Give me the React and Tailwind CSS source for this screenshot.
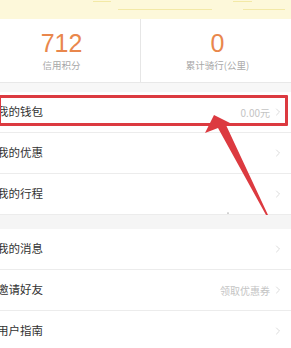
import { ChevronRight } from 'lucide-react'

const rowsA = [
  { label: '我的钱包', extra: '0.00元' },
  { label: '我的优惠' },
  { label: '我的行程' },
]

const rowsB = [
  { label: '我的消息' },
  { label: '邀请好友', extra: '领取优惠券' },
  { label: '用户指南' },
]

function Row({ label, extra }) {
  return (
    <div className="h-[41px] flex items-center justify-between border-b border-[#ececec] pr-[7px]">
      <span className="-ml-[3px] text-[11.5px] text-[#333]">{label}</span>
      <div className="flex items-center gap-[2px]">
        {extra && <span className="text-[10px] text-[#c4c4c4]">{extra}</span>}
        <ChevronRight className="w-[12px] h-[12px] text-[#cfcfcf]" strokeWidth={1.5} />
      </div>
    </div>
  )
}

export default function App() {
  return (
    <main className="relative w-[291px] h-[348px] overflow-hidden bg-white" style={{ fontFamily: '"Noto Sans CJK SC", "Noto Sans", sans-serif' }}>
      {/* yellow header strip */}
      <div className="relative h-[19px] bg-[#fdf8da]">
        <div className="absolute top-[1px] left-[93px] w-[18px] h-[1px] bg-[#f3e9a6]" />
        <div className="absolute top-[9px] left-[118px] w-[94px] h-[1px] bg-[#f3e9a6]" />
        <div className="absolute top-[1px] left-[233px] w-[19px] h-[1px] bg-[#f3e9a6]" />
        <div className="absolute top-[9px] left-[243px] w-[42px] h-[1px] bg-[#f3e9a6]" />
      </div>

      {/* stats */}
      <div className="flex h-[64px] border-b border-[#e8e8e8]">
        <div className="w-[141px] pr-[17px] flex flex-col items-center pt-[9px] border-r border-[#e6e6e6]">
          <span className="text-[25px] leading-[30px] text-[#e9874c]" style={{ fontFamily: '"Liberation Sans", sans-serif' }}>712</span>
          <span className="text-[9.5px] leading-[14px] text-[#a8a8a8]">信用积分</span>
        </div>
        <div className="flex-1 pl-[3px] flex flex-col items-center pt-[9px]">
          <span className="text-[25px] leading-[30px] text-[#e9874c]" style={{ fontFamily: '"Liberation Sans", sans-serif' }}>0</span>
          <span className="text-[9.5px] leading-[14px] text-[#a8a8a8]">累计骑行(公里)</span>
        </div>
      </div>

      <div className="h-[9px] bg-[#f7f7f7]" />

      <div>
        {rowsA.map((r) => (
          <Row key={r.label} {...r} />
        ))}
      </div>

      <div className="h-[14px] bg-[#f5f5f5]" />

      <div>
        {rowsB.map((r) => (
          <Row key={r.label} {...r} />
        ))}
      </div>

      {/* red annotation box + arrow */}
      <div className="absolute left-[-2px] top-[95px] w-[290px] h-[31px] border-[3px] border-[#dc3a40] rounded-[1px]" />
      <svg className="absolute inset-0 pointer-events-none" width="291" height="348" viewBox="0 0 291 348">
        <polygon points="214,115 205,133 218,128 266,215 268,215 226,125 236,126" fill="#dc3a40" />
        <circle cx="228" cy="213" r="0.6" fill="#555" />
      </svg>
    </main>
  )
}
